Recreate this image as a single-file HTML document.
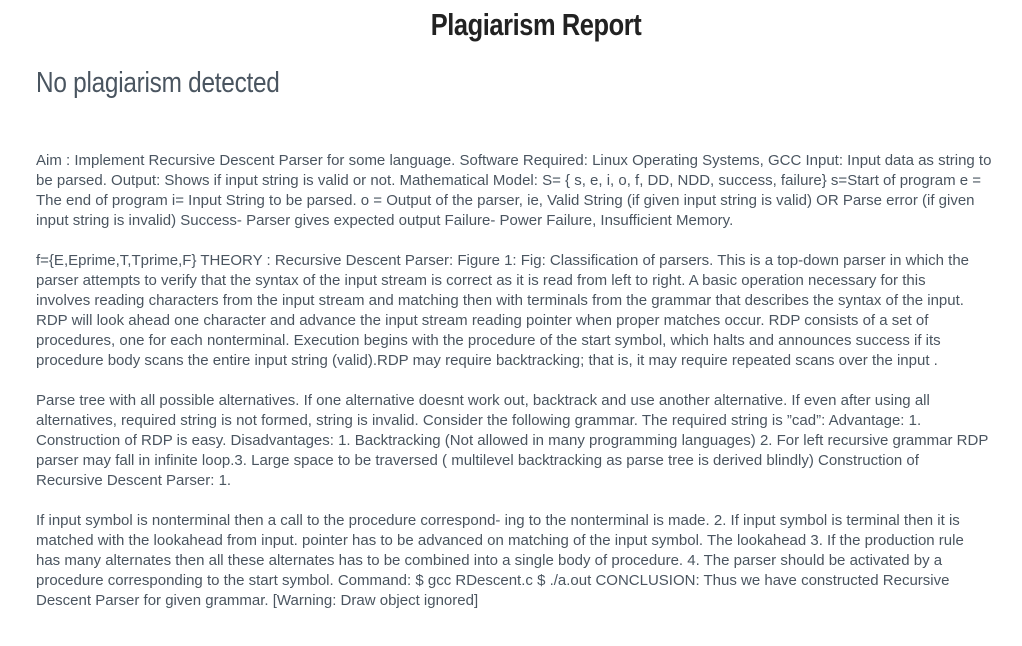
<!DOCTYPE html>
<html><head><meta charset="utf-8"><style>
body{margin:0;background:#fff;width:1022px;height:646px;overflow:hidden}
h1{position:absolute;top:4px;left:0;width:1072px;text-align:center;margin:0;font:bold 31px/42px "Liberation Sans",sans-serif;color:#222;letter-spacing:-0.5px;transform:scaleX(0.82);transform-origin:536px 0}
h2{position:absolute;top:64px;left:36px;margin:0;font:normal 29px/38px "Liberation Sans",sans-serif;color:#4a5560;letter-spacing:-0.3px;transform:scaleX(0.84);transform-origin:0 0}
.t{position:absolute;left:36px;top:151px;font:15px/20px "Liberation Sans",sans-serif;color:#4a5560;white-space:nowrap}
.t p{margin:0 0 20px 0}
</style></head><body>
<h1>Plagiarism Report</h1>
<h2>No plagiarism detected</h2>
<div class="t">
<p>Aim : Implement Recursive Descent Parser for some language. Software Required: Linux Operating Systems, GCC Input: Input data as string to<br>be parsed. Output: Shows if input string is valid or not. Mathematical Model: S= { s, e, i, o, f, DD, NDD, success, failure} s=Start of program e =<br>The end of program i= Input String to be parsed. o = Output of the parser, ie, Valid String (if given input string is valid) OR Parse error (if given<br>input string is invalid) Success- Parser gives expected output Failure- Power Failure, Insufficient Memory.</p>
<p>f={E,Eprime,T,Tprime,F} THEORY : Recursive Descent Parser: Figure 1: Fig: Classification of parsers. This is a top-down parser in which the<br>parser attempts to verify that the syntax of the input stream is correct as it is read from left to right. A basic operation necessary for this<br>involves reading characters from the input stream and matching then with terminals from the grammar that describes the syntax of the input.<br>RDP will look ahead one character and advance the input stream reading pointer when proper matches occur. RDP consists of a set of<br>procedures, one for each nonterminal. Execution begins with the procedure of the start symbol, which halts and announces success if its<br>procedure body scans the entire input string (valid).RDP may require backtracking; that is, it may require repeated scans over the input .</p>
<p>Parse tree with all possible alternatives. If one alternative doesnt work out, backtrack and use another alternative. If even after using all<br>alternatives, required string is not formed, string is invalid. Consider the following grammar. The required string is ”cad”: Advantage: 1.<br>Construction of RDP is easy. Disadvantages: 1. Backtracking (Not allowed in many programming languages) 2. For left recursive grammar RDP<br>parser may fall in infinite loop.3. Large space to be traversed ( multilevel backtracking as parse tree is derived blindly) Construction of<br>Recursive Descent Parser: 1.</p>
<p>If input symbol is nonterminal then a call to the procedure correspond- ing to the nonterminal is made. 2. If input symbol is terminal then it is<br>matched with the lookahead from input. pointer has to be advanced on matching of the input symbol. The lookahead 3. If the production rule<br>has many alternates then all these alternates has to be combined into a single body of procedure. 4. The parser should be activated by a<br>procedure corresponding to the start symbol. Command: $ gcc RDescent.c $ ./a.out CONCLUSION: Thus we have constructed Recursive<br>Descent Parser for given grammar. [Warning: Draw object ignored]</p>
</div>
</body></html>
